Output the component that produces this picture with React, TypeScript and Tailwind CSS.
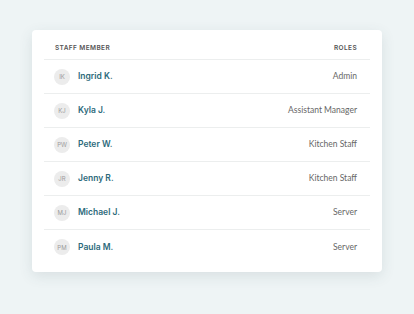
const staff = [
  { initials: "IK", name: "Ingrid K.", role: "Admin" },
  { initials: "KJ", name: "Kyla J.", role: "Assistant Manager" },
  { initials: "PW", name: "Peter W.", role: "Kitchen Staff" },
  { initials: "JR", name: "Jenny R.", role: "Kitchen Staff" },
  { initials: "MJ", name: "Michael J.", role: "Server" },
  { initials: "PM", name: "Paula M.", role: "Server" },
]

const App = () => {
  return (
    <div className="w-[414px] h-[314px] bg-[#eef4f5] pt-[30px] pl-[32px] font-['Inter',sans-serif]">
      {/* card */}
      <div className="w-[350px] h-[242px] bg-white rounded-[4px] shadow-[0_4px_14px_rgba(60,80,90,0.12)] px-[12px]">
        {/* header */}
        <div className="h-[30px] border-b border-[#eceeee] flex items-start justify-between pt-[14px] pl-[11px] pr-[13px] text-[6.5px] leading-[8px] font-semibold tracking-[0.06em] text-[#555]">
          <span>STAFF MEMBER</span>
          <span>ROLES</span>
        </div>

        {/* rows */}
        {staff.map((item, i) => (
          <div
            key={item.name}
            className={`h-[34px] flex items-center justify-between pl-[10px] pr-[13px] ${i < staff.length - 1 ? "border-b border-[#eceeee]" : ""}`}
          >
            <div className="flex items-center gap-[8px]">
              <div className="w-[16px] h-[16px] rounded-full bg-[#ececec] flex items-center justify-center text-[6px] text-[#9a9a9a]">
                {item.initials}
              </div>
              <span className="text-[8.5px] font-semibold text-[#2d6a7b]">{item.name}</span>
            </div>
            <span className="text-[8.5px] text-[#666] font-['Lato',sans-serif]">{item.role}</span>
          </div>
        ))}
      </div>
    </div>
  )
}
export default App
